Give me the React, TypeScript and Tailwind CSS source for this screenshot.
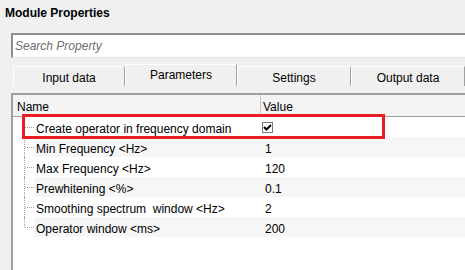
import React from "react";

const rows = [
  { name: "Create operator in frequency domain", value: "check" },
  { name: "Min Frequency <Hz>", value: "1" },
  { name: "Max Frequency <Hz>", value: "120" },
  { name: "Prewhitening <%>", value: "0.1" },
  { name: "Smoothing spectrum  window <Hz>", value: "2" },
  { name: "Operator window <ms>", value: "200" },
];

const tabs = ["Input data", "Parameters", "Settings", "Output data"];

const CheckBox = () => (
  <div className="w-[11px] h-[11px] border border-[#7a7a7a] bg-white flex items-center justify-center">
    <svg width="9" height="9" viewBox="0 0 9 9">
      <path d="M1 4 L3.5 6.5 L8 2" stroke="#000" strokeWidth="2" fill="none" />
    </svg>
  </div>
);

const TreeCell = ({ first, last }: { first: boolean; last: boolean }) => (
  <div className="relative w-[21px] h-full flex-shrink-0 bg-white">
    <div
      className={`absolute left-[11px] w-0 border-l border-dotted border-[#a0a0a0] ${first ? "top-[10px]" : "top-0"} ${last ? "h-[10px]" : "bottom-0"}`}
    />
    <div className="absolute left-[12px] top-[10px] w-[9px] h-0 border-t border-dotted border-[#a0a0a0]" />
  </div>
);

export default function App() {
  return (
    <div className="w-[465px] h-[270px] bg-[#f0f0f0] overflow-hidden flex flex-col text-[12px] text-black font-['Segoe_UI','Liberation_Sans',sans-serif]">
      <div className="h-[25px] pl-[5px] pt-[5px] leading-[16px] font-bold">Module Properties</div>

      <div className="ml-[11px] mt-[8px] h-[25px] w-[470px] flex-shrink-0 bg-white border-t-2 border-l-2 border-t-[#8e8e8e] border-l-[#8e8e8e] border-b border-b-[#e3e3e3] flex items-center pl-[2px] italic text-[#6d6d6d]">
        Search Property
      </div>

      <div className="ml-[13px] mt-[6px] h-[22px] flex items-end flex-shrink-0">
        {tabs.map((t, i) => {
          const sel = i === 1;
          return (
            <div
              key={t}
              className={`${i === 0 ? "w-[112px]" : i === 1 ? "w-[112px]" : "w-[114px]"} ${sel ? "h-[22px] pb-[1px]" : "h-[20px] pt-[2px]"} bg-[#f0f0f0] border-t border-l border-t-white border-l-white border-r border-r-[#a0a0a0] flex items-center justify-center`}
            >
              {t}
            </div>
          );
        })}
      </div>

      <div className="ml-[11px] mt-[7px] flex-1 bg-white border-t-2 border-l-2 border-t-[#a0a0a0] border-l-[#a0a0a0] relative">
        <div className="h-[22px] flex bg-[#f3f3f3] border-b border-[#a0a0a0]">
          <div className="w-[248px] pl-[4px] pt-[3px] flex items-center border-r border-[#c8c8c8]">Name</div>
          <div className="flex-1 pl-[2px] pt-[3px] flex items-center">Value</div>
        </div>
        {rows.map((r, i) => (
          <div key={r.name} className="h-[20px] flex">
            <TreeCell first={i === 0} last={i === rows.length - 1} />
            <div className={`flex-1 flex items-center pt-[3px] ${i % 2 === 1 ? "bg-[#f6f6f6]" : "bg-white"}`}>
              <div className="w-[228px] pl-[2px] whitespace-pre">{r.name}</div>
              <div className="pl-[3px]">
                {r.value === "check" ? (
                  <div className="-ml-[3px] -mt-[2px]">
                    <CheckBox />
                  </div>
                ) : (
                  r.value
                )}
              </div>
            </div>
          </div>
        ))}
        <div className="absolute left-[9px] top-[19px] w-[363px] h-[25px] border-[3px] border-[#ec1c24]" />
      </div>
    </div>
  );
}
